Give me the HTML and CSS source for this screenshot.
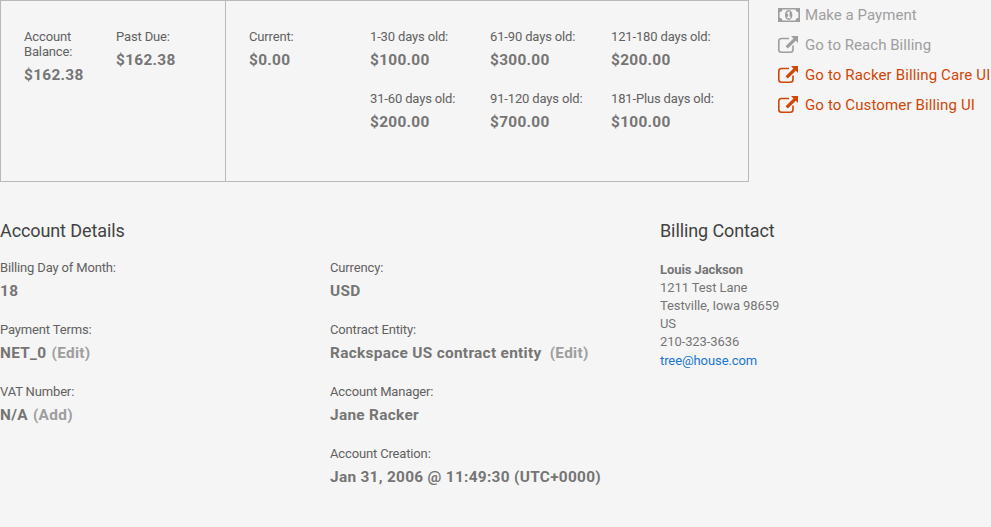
FILE: index.html
```html
<!DOCTYPE html>
<html lang="en">
<head>
<meta charset="utf-8">
<title>Billing</title>
<link rel="stylesheet" href="styles.css">
</head>
<body>
<svg class="defs" width="0" height="0" aria-hidden="true">
  <symbol id="money" viewBox="0 0 22 18"><path fill-rule="evenodd" fill="currentColor" d="M0 2h22v14H0zM4.500 3.600A3 3 0 0 1 1.600 6.200v5.600a3 3 0 0 1 2.900 2.600h13a3 3 0 0 1 2.900-2.600V6.200A3 3 0 0 1 17.500 3.600z"/><ellipse cx="10.700" cy="9" rx="3.700" ry="4.900" fill="currentColor"/><path class="digit" d="M9.100 7.500l1.700-1.300v5M9.100 11.600h3.400"/></symbol>
  <symbol id="external" viewBox="0 0 22 18"><path fill="none" stroke="currentColor" stroke-width="1.600" d="M11 2.500H3.500Q.8 2.500 .8 5.200v8.300q0 2.700 2.700 2.700H12.300q2.700 0 2.700-2.700V9.500"/><path fill="currentColor" d="M13 0h7v7l-2.200-2.200-8 7.700-2.200-2.200 7.900-7.800z"/></symbol>
</svg>
<main class="page">
  <section class="top">
    <div class="balances">
      <div class="summary">
        <dl class="item"><dt>Account Balance:</dt><dd>$162.38</dd></dl>
        <dl class="item"><dt>Past Due:</dt><dd>$162.38</dd></dl>
      </div>
      <div class="aging">
        <dl class="item current"><dt>Current:</dt><dd>$0.00</dd></dl>
        <dl class="item"><dt>1-30 days old:</dt><dd>$100.00</dd></dl>
        <dl class="item"><dt>61-90 days old:</dt><dd>$300.00</dd></dl>
        <dl class="item"><dt>121-180 days old:</dt><dd>$200.00</dd></dl>
        <dl class="item"><dt>31-60 days old:</dt><dd>$200.00</dd></dl>
        <dl class="item"><dt>91-120 days old:</dt><dd>$700.00</dd></dl>
        <dl class="item"><dt>181-Plus days old:</dt><dd>$100.00</dd></dl>
      </div>
    </div>
    <nav class="actions">
      <a class="action disabled"><svg class="icon"><use href="#money"/></svg><span>Make a Payment</span></a>
      <a class="action disabled"><svg class="icon"><use href="#external"/></svg><span>Go to Reach Billing</span></a>
      <a class="action"><svg class="icon"><use href="#external"/></svg><span>Go to Racker Billing Care UI</span></a>
      <a class="action"><svg class="icon"><use href="#external"/></svg><span>Go to Customer Billing UI</span></a>
    </nav>
  </section>
  <section class="bottom">
    <div class="details">
      <h2>Account Details</h2>
      <div class="columns">
        <div class="column">
          <dl class="item"><dt>Billing Day of Month:</dt><dd>18</dd></dl>
          <dl class="item"><dt>Payment Terms:</dt><dd>NET_0 <a class="edit">(Edit)</a></dd></dl>
          <dl class="item"><dt>VAT Number:</dt><dd>N/A <a class="edit">(Add)</a></dd></dl>
        </div>
        <div class="column">
          <dl class="item"><dt>Currency:</dt><dd>USD</dd></dl>
          <dl class="item"><dt>Contract Entity:</dt><dd>Rackspace US contract entity <a class="edit wide">(Edit)</a></dd></dl>
          <dl class="item"><dt>Account Manager:</dt><dd>Jane Racker</dd></dl>
          <dl class="item"><dt>Account Creation:</dt><dd>Jan 31, 2006 @ 11:49:30 (UTC+0000)</dd></dl>
        </div>
      </div>
    </div>
    <div class="contact">
      <h2>Billing Contact</h2>
      <address><strong>Louis Jackson</strong><br>1211 Test Lane<br>Testville, Iowa 98659<br>US<br>210-323-3636<a class="mail">tree@house.com</a></address>
    </div>
  </section>
</main>
</body>
</html>
```
FILE: styles.css
```css
* { box-sizing: border-box; }
body { margin: 0; background: #f5f5f5; color: #757575; font: 13px/15px Roboto, sans-serif; letter-spacing: -.15px; overflow: hidden; }
.defs { position: absolute; }
.page { width: 991px; height: 527px; }
.top { display: flex; height: 182px; }
.balances { display: flex; width: 749px; border: 1px solid #b9b9b9; }
.summary { display: flex; width: 225px; padding: 28px 0 0 23px; border-right: 1px solid #b9b9b9; }
.summary .item { width: 92px; padding-right: 20px; }
.aging { display: grid; grid-template-columns: 121px 120px 121px 1fr; grid-auto-rows: 62px; flex: 1; padding: 28px 0 0 23px; }
.current { grid-row: span 2; }
.item, dd { margin: 0; }
dt { color: #616161; }
dd { margin-top: 6px; font-size: 15.400px; line-height: 20px; font-weight: 700; letter-spacing: .3px; white-space: nowrap; }
.actions { margin-left: 29px; }
.action { display: flex; align-items: center; height: 30px; color: #d14505; font-size: 15px; letter-spacing: .13px; white-space: nowrap; }
.action.disabled { color: #9e9e9e; letter-spacing: .04px; }
.icon { width: 22px; height: 18px; margin-right: 5px; flex: none; }
.digit { fill: none; stroke: #f5f5f5; stroke-width: 1.500; }
.bottom { display: flex; padding-top: 38px; }
.details { width: 660px; }
h2 { margin: 0; color: #424242; font-size: 18px; line-height: 22px; font-weight: 400; letter-spacing: -.1px; }
.columns { display: flex; margin-top: 18px; }
.column { width: 330px; }
.column .item { height: 62px; }
.edit { margin-left: 1px; color: #9e9e9e; }
.edit.wide { margin-left: 4px; }
address { margin-top: 19px; font-style: normal; line-height: 18px; letter-spacing: -.09px; }
.mail { display: block; margin-top: 1px; color: #1976d2; }
```
